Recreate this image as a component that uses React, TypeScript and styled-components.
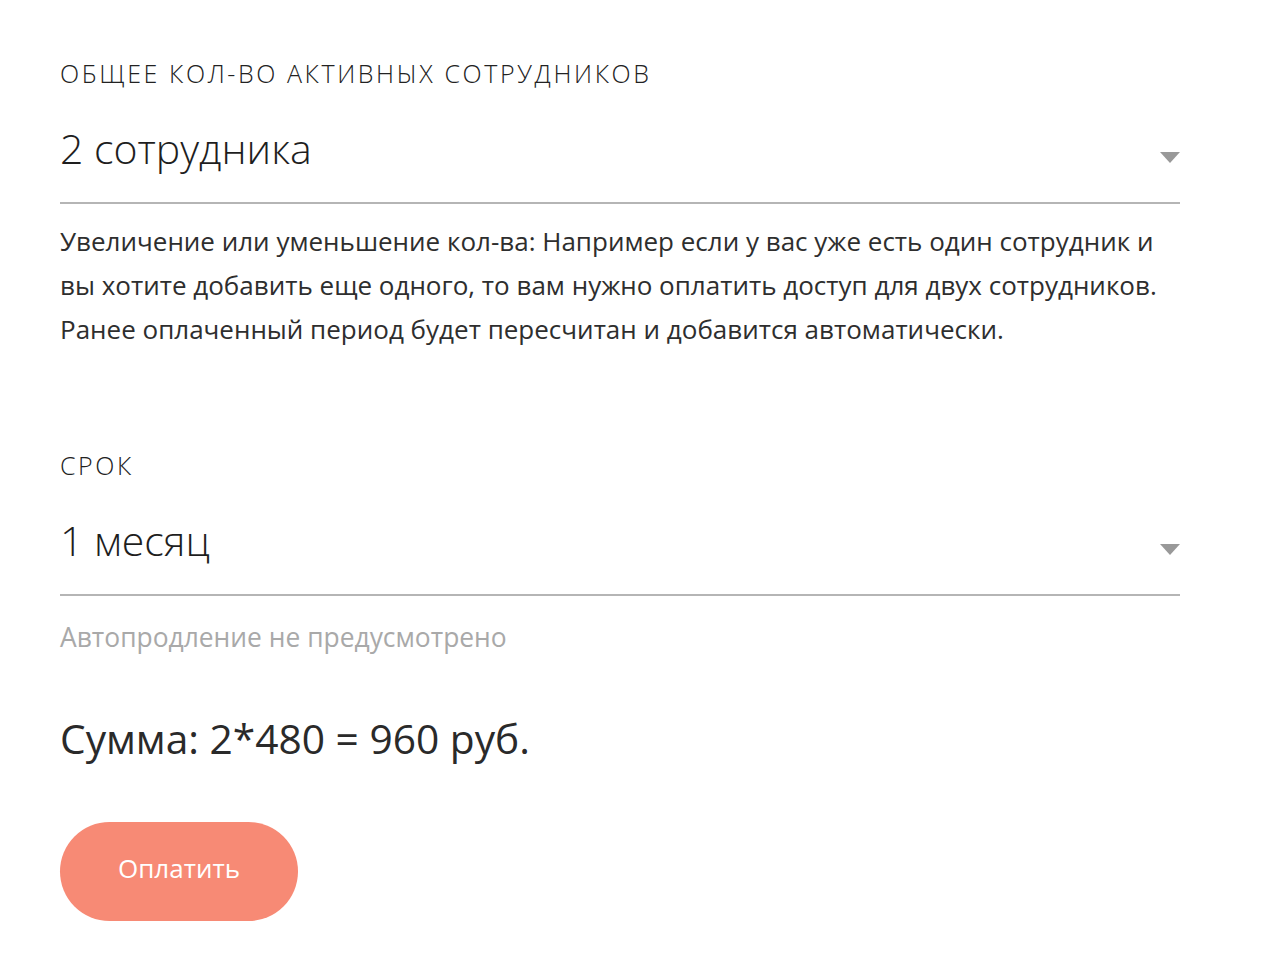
import * as React from "react";
import styled, { createGlobalStyle } from "styled-components";

const GlobalStyle = createGlobalStyle`
  html, body {
    margin: 0;
    padding: 0;
    background: #ffffff;
  }
  body {
    font-family: "Open Sans", "Noto Sans", "Liberation Sans", sans-serif;
    color: #2c2c2c;
  }
`;

const Page = styled.div`
  width: 1120px;
  padding: 58px 60px 40px;
  display: flex;
  flex-direction: column;
`;

const Label = styled.div<{ $offset?: number }>`
  margin-top: ${(p) => p.$offset ?? 0}px;
  font-size: 25px;
  font-weight: 300;
  line-height: 30px;
  letter-spacing: 2.6px;
  text-transform: uppercase;
  color: #222;
`;

const SelectRow = styled.div`
  display: flex;
  align-items: center;
  justify-content: space-between;
  padding: 35px 0 29px;
  border-bottom: 2px solid #b5b5b5;
  cursor: pointer;
`;

const SelectValue = styled.span`
  font-size: 41px;
  font-weight: 300;
  line-height: 50px;
  color: #1e1e1e;
`;

const Caret = styled.span`
  width: 0;
  height: 0;
  margin-top: 18px;
  border-left: 10px solid transparent;
  border-right: 10px solid transparent;
  border-top: 11px solid #999999;
`;

const Note = styled.p`
  margin: 15px 0 0;
  font-size: 26px;
  line-height: 44px;
  color: #2e2e2e;
`;

const Hint = styled.div`
  margin-top: 26px;
  font-size: 26.4px;
  line-height: 30px;
  color: #a9a9a9;
`;

const Total = styled.div`
  margin-top: 61px;
  font-size: 40.7px;
  line-height: 50px;
  color: #2a2a2a;
`;

const PayButton = styled.button`
  margin-top: 59px;
  width: 238px;
  height: 99px;
  padding: 0 0 8px;
  border: none;
  border-radius: 50px;
  background: #f78a75;
  color: #ffffff;
  font-family: inherit;
  font-size: 26px;
  cursor: pointer;
`;

const Field: React.FC<{ label: string; value: string; offset?: number }> = ({
  label,
  value,
  offset,
}) => (
  <>
    <Label $offset={offset}>{label}</Label>
    <SelectRow>
      <SelectValue>{value}</SelectValue>
      <Caret />
    </SelectRow>
  </>
);

export default function App() {
  return (
    <>
      <GlobalStyle />
      <Page>
        <Field label="Общее кол-во активных сотрудников" value="2 сотрудника" />
        <Note>
          Увеличение или уменьшение кол-ва: Например если у вас уже есть один
          сотрудник и вы хотите добавить еще одного, то вам нужно оплатить
          доступ для двух сотрудников. Ранее оплаченный период будет пересчитан
          и добавится автоматически.
        </Note>
        <Field label="Срок" value="1 месяц" offset={99} />
        <Hint>Автопродление не предусмотрено</Hint>
        <Total>Сумма: 2*480 = 960 руб.</Total>
        <PayButton>Оплатить</PayButton>
      </Page>
    </>
  );
}
